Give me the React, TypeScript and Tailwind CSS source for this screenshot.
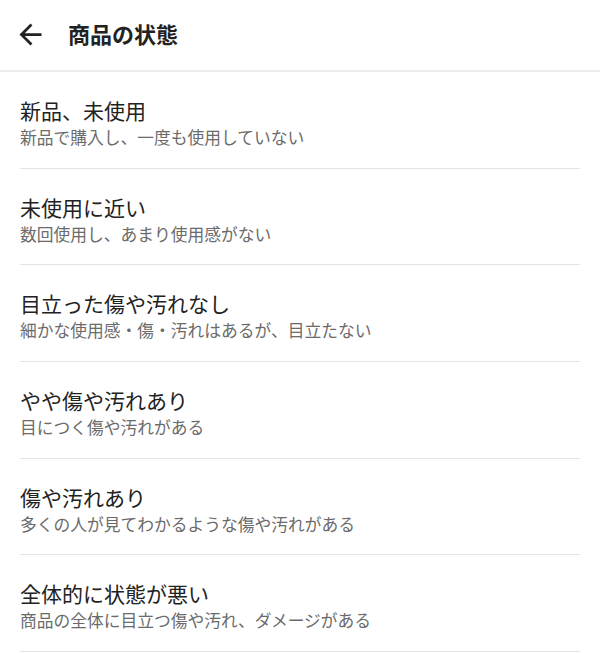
import React from "react";

const items = [
  { title: "新品、未使用", desc: "新品で購入し、一度も使用していない" },
  { title: "未使用に近い", desc: "数回使用し、あまり使用感がない" },
  { title: "目立った傷や汚れなし", desc: "細かな使用感・傷・汚れはあるが、目立たない" },
  { title: "やや傷や汚れあり", desc: "目につく傷や汚れがある" },
  { title: "傷や汚れあり", desc: "多くの人が見てわかるような傷や汚れがある" },
  { title: "全体的に状態が悪い", desc: "商品の全体に目立つ傷や汚れ、ダメージがある" },
];

export default function App() {
  return (
    <div
      className="w-[600px] h-[653px] bg-white overflow-hidden"
      style={{ fontFamily: '"Noto Sans CJK JP", "Noto Sans", sans-serif' }}
    >
      <header className="h-[72px] flex items-center border-b-2 border-[#ececec]">
        <div className="w-[68px] pl-[14px] flex items-center">
          <svg width="33" height="33" viewBox="0 0 24 24" className="mt-[-2px]">
            <path
              fill="#222222"
              d="M20 11H7.83l5.59-5.59L12 4l-8 8 8 8 1.41-1.41L7.83 13H20v-2z"
            />
          </svg>
        </div>
        <h1 className="text-[22px] font-bold text-[#222222] leading-[28px] mt-[-4px]">
          商品の状態
        </h1>
      </header>
      <ul className="px-5">
        {items.map((it) => (
          <li
            key={it.title}
            className="h-[96.7px] border-b border-[#e3e3e3] pt-[24px]"
          >
            <div className="text-[21px] leading-[28px] text-[#222222]">
              {it.title}
            </div>
            <div className="text-[16.75px] leading-[24px] mt-[1px] text-[#6b6b6b]">
              {it.desc}
            </div>
          </li>
        ))}
      </ul>
    </div>
  );
}
